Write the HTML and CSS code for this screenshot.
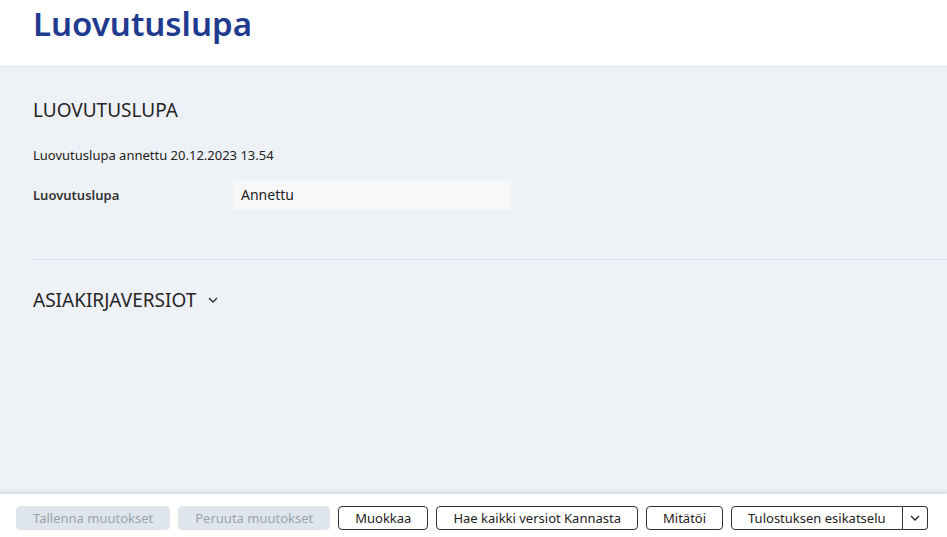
FILE: index.html
```html
<!DOCTYPE html>
<html lang="fi">
<head>
    <meta charset="UTF-8">
    <title>Luovutuslupa</title>
    <link rel="stylesheet" href="styles.css">
</head>
<body>
<div class="page">
    <header class="top">
        <h1>Luovutuslupa</h1>
    </header>

    <main class="content">
        <section class="block">
            <h2>LUOVUTUSLUPA</h2>
            <p class="note">Luovutuslupa annettu 20.12.2023 13.54</p>
            <div class="field">
                <label>Luovutuslupa</label>
                <div class="value">Annettu</div>
            </div>
        </section>

        <section class="versions">
            <h2 class="toggle">ASIAKIRJAVERSIOT
                <svg width="12" height="12" viewBox="0 0 12 12"><path d="M2 4l4 4 4-4" fill="none" stroke="#333" stroke-width="1.4"/></svg>
            </h2>
        </section>
    </main>

    <footer class="actions">
        <button class="btn" disabled>Tallenna muutokset</button>
        <button class="btn" disabled>Peruuta muutokset</button>
        <button class="btn">Muokkaa</button>
        <button class="btn">Hae kaikki versiot Kannasta</button>
        <button class="btn">Mitätöi</button>
        <div class="split">
            <button class="btn main">Tulostuksen esikatselu</button>
            <button class="btn caret">
                <svg width="12" height="12" viewBox="0 0 12 12"><path d="M2 4l4 4 4-4" fill="none" stroke="#222" stroke-width="1.3"/></svg>
            </button>
        </div>
    </footer>
</div>
</body>
</html>
```

FILE: styles.css
```css
* {
    padding: 0;
    margin: 0;
    box-sizing: border-box;
}

body {
    font-family: "Noto Sans", "Open Sans", sans-serif;
    color: #222;
    background: #eef1f6;
}

.page {
    height: 537px;
    display: flex;
    flex-direction: column;
}

.top {
    height: 67px;
    flex-shrink: 0;
    background: #fff;
    border-bottom: 1px solid #dde3ec;
    padding-left: 33px;
}

.top h1 {
    font-size: 33px;
    font-weight: 600;
    color: #1f3b8f;
    line-height: 48px;
}

.content {
    flex: 1;
    padding: 28px 0 0 33px;
}

.content h2 {
    font-size: 19px;
    font-weight: 400;
    line-height: 30px;
    color: #252525;
}

.note {
    font-size: 13px;
    margin-top: 21px;
    line-height: 18px;
}

.field {
    display: flex;
    align-items: center;
    margin-top: 16px;
}

.field label {
    width: 200px;
    font-size: 13px;
    font-weight: 600;
    color: #333;
}

.value {
    width: 278px;
    height: 30px;
    background: #f7f8fa;
    border-radius: 2px;
    padding-left: 8px;
    font-size: 14px;
    line-height: 30px;
}

.block {
    padding-bottom: 49px;
    border-bottom: 1px solid #dde1e8;
}

.versions {
    padding-top: 25px;
}

.toggle {
    display: flex;
    align-items: center;
    gap: 11px;
}

.actions {
    height: 43px;
    flex-shrink: 0;
    background: #fff;
    box-shadow: 0 -3px 3px rgba(0, 0, 0, 0.08);
    display: flex;
    align-items: flex-start;
    gap: 8px;
    padding: 12px 0 0 16px;
}

.btn {
    flex-shrink: 0;
    height: 24px;
    padding: 0 16px;
    white-space: nowrap;
    font-family: inherit;
    font-size: 13px;
    color: #222;
    background: #fff;
    border: 1px solid #333;
    border-radius: 4px;
}

.btn:disabled {
    background: #dfe5ec;
    border-color: #dfe5ec;
    color: #9aa3ad;
}

.split {
    display: flex;
    flex-shrink: 0;
}

.split .main {
    border-radius: 4px 0 0 4px;
}

.split .caret {
    width: 25px;
    padding: 0;
    border-left: none;
    border-radius: 0 4px 4px 0;
    display: flex;
    align-items: center;
    justify-content: center;
}
```
